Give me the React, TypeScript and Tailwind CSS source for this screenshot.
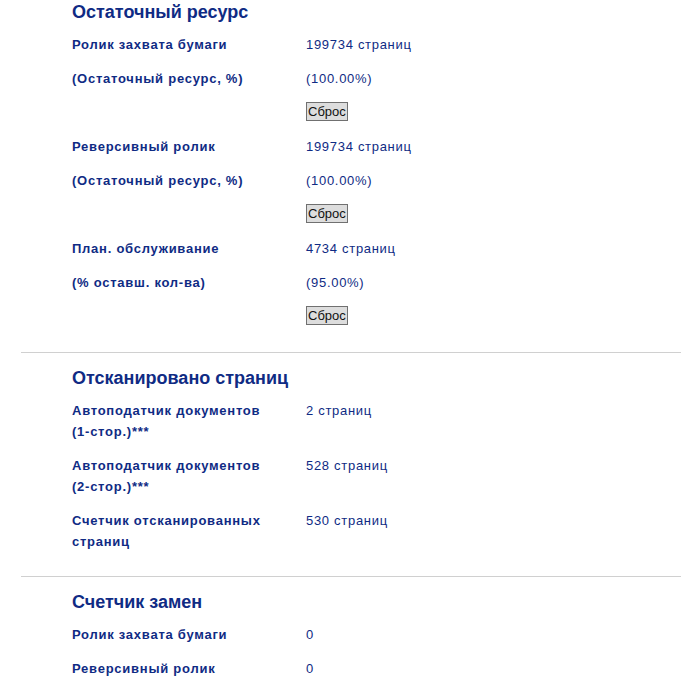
const font = { fontFamily: '"Liberation Sans", Arial, sans-serif' };

type Row = { label: string; value: string; reset?: boolean };

type Section = { title: string; rows: Row[] };

const sections: Section[] = [
  {
    title: "Остаточный ресурс",
    rows: [
      { label: "Ролик захвата бумаги", value: "199734 страниц" },
      { label: "(Остаточный ресурс, %)", value: "(100.00%)", reset: true },
      { label: "Реверсивный ролик", value: "199734 страниц" },
      { label: "(Остаточный ресурс, %)", value: "(100.00%)", reset: true },
      { label: "План. обслуживание", value: "4734 страниц" },
      { label: "(% оставш. кол-ва)", value: "(95.00%)", reset: true },
    ],
  },
  {
    title: "Отсканировано страниц",
    rows: [
      { label: "Автоподатчик документов (1-стор.)***", value: "2 страниц" },
      { label: "Автоподатчик документов (2-стор.)***", value: "528 страниц" },
      { label: "Счетчик отсканированных страниц", value: "530 страниц" },
    ],
  },
  {
    title: "Счетчик замен",
    rows: [
      { label: "Ролик захвата бумаги", value: "0" },
      { label: "Реверсивный ролик", value: "0" },
    ],
  },
];

function InfoRow({ row }: { row: Row }) {
  return (
    <>
      <div className="flex text-[13px] leading-[21px] text-[#0f2b84]">
        <div className="w-[234px] shrink-0 pt-[7.5px] pb-[5.5px] pr-[28px] font-bold tracking-[0.75px]">
          {row.label}
        </div>
        <div className="pt-[7.5px] pb-[5.5px] tracking-[0.7px]">{row.value}</div>
      </div>
      {row.reset && (
        <div className="flex h-[34px] items-center pl-[234px]">
          <button className="mt-[1px] h-[19px] border border-[#707070] bg-[#dddddd] px-[1px] text-[13px] leading-[15px] text-[#111]">
            Сброс
          </button>
        </div>
      )}
    </>
  );
}

export default function App() {
  return (
    <div className="min-h-[680px] w-[681px] bg-white" style={font}>
      {sections.map((section, i) => (
        <div key={section.title} className={i > 0 ? "ml-[21px] border-t border-[#d0d0d0] pt-[13px]" : ""}>
          <div className={i > 0 ? "pb-[19px] pl-[51px]" : "pb-[20px] pl-[72px]"}>
            <h2 className="mb-[2px] text-[18px] leading-[24px] font-bold text-[#0f2b84]">{section.title}</h2>
            {section.rows.map((row, j) => (
              <InfoRow key={j} row={row} />
            ))}
          </div>
        </div>
      ))}
    </div>
  );
}
